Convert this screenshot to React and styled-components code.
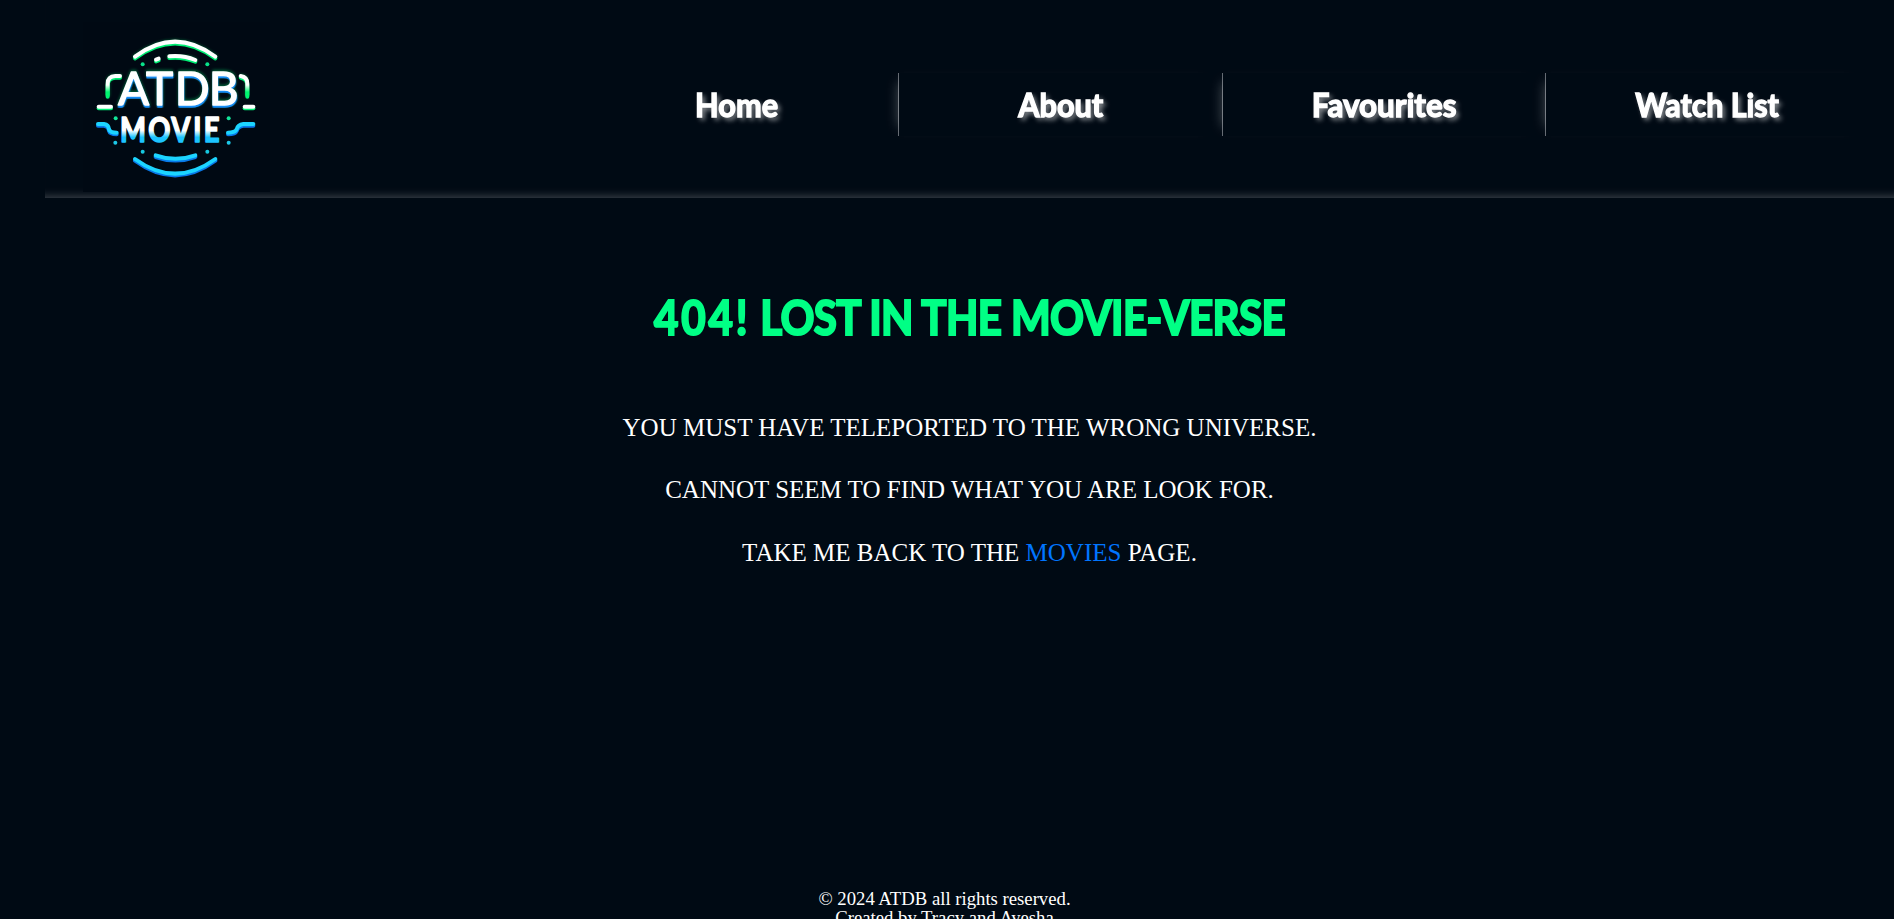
import React from "react";
import styled, { createGlobalStyle } from "styled-components";

const Global = createGlobalStyle`
  * { box-sizing: border-box; }
  html, body { margin: 0; background: #fff; overflow: hidden; }
`;
const Page = styled.div`
  width: 1894px;
  height: 919px;
  display: flex;
  flex-direction: column;
  overflow: hidden;
  background: #000a14;
  color: #fff;
  font-family: "Liberation Serif", serif;
`;
const Header = styled.header`
  display: flex;
  flex: none;
  height: 198px;
  margin-left: 45px;
  padding-left: 38px;
  box-shadow: inset 0 -10px 10px -9px rgba(255, 255, 255, 0.27);
`;
const LogoImage = styled.svg`
  flex: none;
  width: 187px;
  height: 170px;
  margin-top: 22px;
  background: #000913;
`;
const LogoText = styled.text`
  font-family: Lato, sans-serif;
  font-size: ${(p) => p.$size}px;
  font-weight: ${(p) => p.$weight};
  stroke-width: ${(p) => p.$stroke};
  stroke-linejoin: round;
  filter: ${(p) => p.$shadow || "none"};
`;
const Nav = styled.nav`
  display: grid;
  grid-template-columns: 324px 324px 323px 323px;
  height: 63px;
  margin: 73px 0 0 305px;
`;
const NavItem = styled.a`
  display: flex;
  align-items: center;
  justify-content: center;
  border-right: ${(p) => (p.$last ? "0" : "1px solid #646a72")};
  box-shadow: ${(p) => (p.$first ? "none" : "-10px 0 12px -10px rgba(255, 255, 255, 0.3)")};
  font: 700 33px/40px Lato, sans-serif;
  text-shadow: 3px 3px 5px rgba(255, 255, 255, 0.6);
`;
const NavText = styled.span`
  position: relative;
  top: -1px;
  white-space: nowrap;
  -webkit-text-stroke: 1.4px #fff;
  transform: scaleX(${(p) => p.$squeeze});
`;
const Main = styled.main`
  flex: 1;
  margin-left: 45px;
  text-align: center;
`;
const Title = styled.h1`
  margin: 89px 0 0;
  color: #00ff85;
  font: 700 48px/60px Lato, sans-serif;
  letter-spacing: -0.7px;
  -webkit-text-stroke: 2.2px #00ff85;
  transform: scaleX(0.877);
`;
const Code = styled.span`
  letter-spacing: 3.3px;
`;
const Message = styled.div`
  margin-top: 50px;
`;
const Line = styled.p`
  margin: 0;
  font-size: 25px;
  line-height: 62.4px;
`;
const MovieLink = styled.a`
  color: #0075ff;
`;
const Footer = styled.footer`
  flex: none;
  height: 30px;
  width: 1889px;
  text-align: center;
  font-size: 18.72px;
  line-height: 19px;
`;

const links = [
  { label: "Home", squeeze: 0.93 },
  { label: "About", squeeze: 0.93 },
  { label: "Favourites", squeeze: 0.95 },
  { label: "Watch List", squeeze: 0.92 },
];

const dots = [
  [188, 118, "#08e38a"], [382, 118, "#08e38a"],
  [107, 280, "#12e69a"], [446, 280, "#12e69a"],
  [106, 353, "#1cc8e8"], [446, 353, "#1cc8e8"],
  [188, 380, "#16c8e0"], [382, 380, "#16c8e0"],
];

const topStrokes = [
  "M165 95 Q285 5 406 95",
  "M268 94 Q310 90 346 105",
  "M228 104 L236 101",
  "M120 153 H106 Q83 154 83 176 V210",
  "M482 153 Q502 156 502 176 V210",
  "M56 245 H93",
  "M494 245 H520",
];
const bottomStrokes = [
  "M165 402 Q285 490 406 402",
  "M227 391 Q286 412 346 391",
  "M54 297 H72 Q86 299 87 313 Q90 323 110 323",
  "M520 297 H490 Q473 299 470 313 Q466 323 444 323",
];

function Logo() {
  return (
    <LogoImage viewBox="9 -9 561 510" role="img" aria-label="ATDB Movie">
      <defs>
        <linearGradient id="side" x1="0" x2="0" y1="145" y2="215" gradientUnits="userSpaceOnUse">
          <stop offset="0.5" stopColor="#fff" />
          <stop offset="0.8" stopColor="#00f56f" />
        </linearGradient>
        <linearGradient id="movie" x1="0" x2="0" y1="272" y2="353" gradientUnits="userSpaceOnUse">
          <stop offset="0.55" stopColor="#fff" />
          <stop offset="0.8" stopColor="#1cc4ff" />
        </linearGradient>
        <filter id="glow" x="-20%" y="-50%" width="140%" height="200%">
          <feGaussianBlur stdDeviation="5" />
        </filter>
      </defs>
      <g fill="none" strokeLinecap="round" strokeWidth="12">
        {topStrokes.map((d) => (
          <g key={d}>
            <path d={d} stroke="#00c45a" opacity="0.5" filter="url(#glow)" />
            <path d={d} stroke="#00f076" transform="translate(0 5)" />
            <path d={d} stroke={d.includes("V210") ? "url(#side)" : "#fff"} />
          </g>
        ))}
        {bottomStrokes.map((d) => (
          <g key={d}>
            <path d={d} stroke="#0878e8" transform="translate(0 5)" />
            <path d={d} stroke="#1cd4ff" />
          </g>
        ))}
      </g>
      {dots.map(([cx, cy, fill]) => (
        <circle key={`${cx}-${cy}`} cx={cx} cy={cy} r="6" fill={fill} />
      ))}
      <LogoText
        $size={138}
        $weight={400}
        $stroke={4}
        $shadow="drop-shadow(1px 6px 0 #158cf5) drop-shadow(0 -4px 4px rgba(0, 212, 106, 0.45))"
        x="114 198 284 386"
        y="239"
        fill="#fff"
        stroke="#fff"
      >
        ATDB
      </LogoText>
      <g transform="scale(0.8 1)">
        <LogoText $size={103} $weight={700} $stroke={5} x="150 256 342 425 464" y="350" fill="url(#movie)" stroke="url(#movie)">MOVIE</LogoText>
      </g>
    </LogoImage>
  );
}

export default function App() {
  return (
    <Page>
      <Global />
      <Header>
        <Logo />
        <Nav>
          {links.map((link, i) => (
            <NavItem key={link.label} $first={i === 0} $last={i === links.length - 1}>
              <NavText $squeeze={link.squeeze}>{link.label}</NavText>
            </NavItem>
          ))}
        </Nav>
      </Header>
      <Main>
        <Title><Code>404!</Code> LOST IN THE MOVIE-VERSE</Title>
        <Message>
          <Line>YOU MUST HAVE TELEPORTED TO THE WRONG UNIVERSE.</Line>
          <Line>CANNOT SEEM TO FIND WHAT YOU ARE LOOK FOR.</Line>
          <Line>TAKE ME BACK TO THE <MovieLink>MOVIES</MovieLink> PAGE.</Line>
        </Message>
      </Main>
      <Footer>© 2024 ATDB all rights reserved.<br />Created by Tracy and Ayesha</Footer>
    </Page>
  );
}
